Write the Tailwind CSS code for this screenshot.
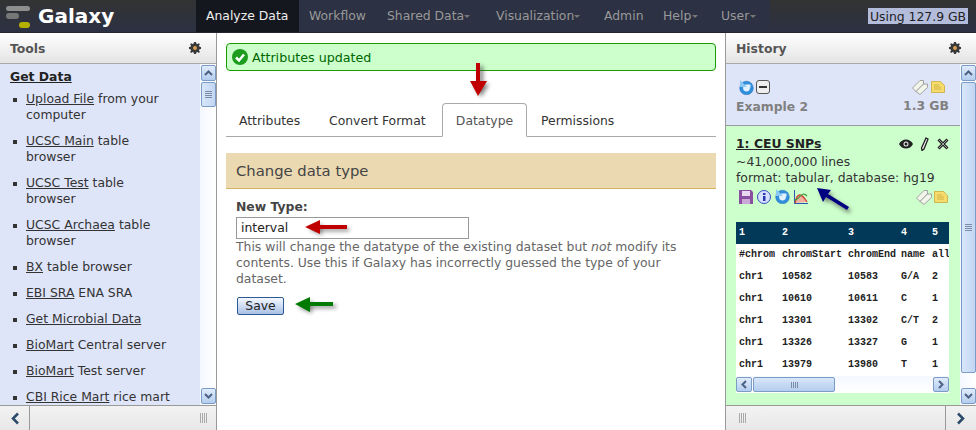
<!DOCTYPE html>
<html lang="en">
<head>
  <meta charset="UTF-8" />
  <title>Galaxy</title>
  <script src="https://cdn.jsdelivr.net/npm/@tailwindcss/browser@4"></script>
</head>
<body class="w-[976px] h-[430px] overflow-hidden relative bg-white text-[#333] text-[12.4px] leading-[16px] font-['DejaVu_Sans',sans-serif]">

  <!-- shared icons -->
  <svg class="hidden">
    <symbol id="gear" viewBox="0 0 12 12">
      <path fill="#3a3a3a" d="M5 0h2l.3 1.6 1.2.5L9.900 1.200l1 1-.9 1.400.5 1.200L12 5v2l-1.500.3-.5 1.200.9 1.400-1 1-1.400-.9-1.200.5L7 12H5l-.3-1.500-1.200-.5-1.400.9-1-1 .9-1.400-.5-1.200L0 7V5l1.500-.2.5-1.200-.9-1.400 1-1 1.400.9 1.200-.5z"/>
      <circle cx="6" cy="6" r="2" fill="#d8a050"/>
    </symbol>
    <symbol id="refresh" viewBox="0 0 15 15">
      <circle cx="7.500" cy="8" r="6.800" fill="#2f8fdc" stroke="#1f6fb8" stroke-width=".5"/>
      <circle cx="7.500" cy="8" r="3.400" fill="#e4f2ff"/>
      <path fill="#8ccaf5" d="M1 0v7h7z"/>
      <path fill="#e4f2ff" d="M8 4.500h3.500V8z"/>
    </symbol>
    <symbol id="tags" viewBox="0 0 16 16">
      <path fill="#f2f5ea" stroke="#9a9a9a" stroke-width=".9" d="M.5 9 8 1.500h3.500V5L4 12.500z"/>
      <path fill="#f2f5ea" stroke="#9a9a9a" stroke-width=".9" d="M4 12.500 11.500 5h4v3.500L8 15.500z"/>
    </symbol>
    <symbol id="note" viewBox="0 0 14 12">
      <path fill="#f6dc6c" stroke="#c9a93a" stroke-width=".8" d="M.5.500h9l4 4v7H.5z"/>
      <path stroke="#c9a93a" stroke-width=".8" d="M3 4h5M3 6h7M3 8h7"/>
    </symbol>
  </svg>

  <!-- masthead -->
  <header class="h-[33px] flex bg-gradient-to-b from-[#333333] to-[#2c3143] border-b border-[#23262f]">
    <div class="w-[196px] flex items-center pl-[6px] gap-[8px]">
      <svg width="24" height="24" viewBox="0 0 24 24">
        <rect x="0" y="2" width="24" height="5" rx="2.500" fill="#8e8e8e"/>
        <rect x="0" y="9" width="13" height="6" rx="3" fill="#777"/>
        <rect x="13" y="18" width="11" height="6" rx="3" fill="#b5b000"/>
      </svg>
      <span class="font-bold text-white text-[20px]">Galaxy</span>
    </div>
    <nav class="w-[574px] flex bg-[#2c3143] text-[#999]">
      <a class="w-[103px] bg-[#15171f] text-[#eee] pl-[10px] leading-[32px]">Analyze Data</a>
      <a class="w-[78px] pl-[10px] leading-[32px]">Workflow</a>
      <a class="w-[109px] pl-[10px] leading-[32px]">Shared Data<i class="inline-block mb-[2px] border-x-[3.500px] border-t-[3px] border-x-transparent border-t-[#777]"></i></a>
      <a class="w-[108px] pl-[10px] leading-[32px]">Visualization<i class="inline-block mb-[2px] border-x-[3.500px] border-t-[3px] border-x-transparent border-t-[#777]"></i></a>
      <a class="w-[59px] pl-[10px] leading-[32px]">Admin</a>
      <a class="w-[58px] pl-[10px] leading-[32px]">Help<i class="inline-block mb-[2px] ml-[1px] border-x-[3.500px] border-t-[3px] border-x-transparent border-t-[#777]"></i></a>
      <a class="flex-1 pl-[10px] leading-[32px]">User<i class="inline-block mb-[2px] ml-[1px] border-x-[3.500px] border-t-[3px] border-x-transparent border-t-[#777]"></i></a>
    </nav>
    <div class="flex-1 flex justify-end pt-[8px] pr-[8px]">
      <span class="h-[16px] w-[100px] text-center bg-[#b4bcdc] text-[#222] leading-[18px] whitespace-nowrap">Using 127.9 GB</span>
    </div>
  </header>

  <div class="flex h-[397px]">

    <!-- tools panel -->
    <aside class="w-[217px] flex flex-col border-r border-[#999]">
      <div class="h-[31px] flex items-center justify-between pl-[10px] pr-[15px] pt-[2px] bg-gradient-to-b from-white to-[#e4e4e4] border-b border-[#aaa]">
        <span class="font-bold text-[#555]">Tools</span>
        <svg width="12" height="12" class="mb-[3px]"><use href="#gear"/></svg>
      </div>
      <div class="h-[341px] flex bg-[#dfe5f9] overflow-hidden">
        <div class="w-[200px] pl-[10px] pt-[5px] text-[#333]">
          <a class="block font-bold underline text-[#222] mb-[6px]">Get Data</a>
          <ul class="pl-[16px] w-[166px] list-none flex flex-col gap-[10px] whitespace-normal">
            <li class="relative before:absolute before:content-[''] before:left-[-13px] before:top-[7px] before:w-[4px] before:h-[4px] before:bg-[#333]"><a class="underline">Upload File</a> from your computer</li>
            <li class="relative before:absolute before:content-[''] before:left-[-13px] before:top-[7px] before:w-[4px] before:h-[4px] before:bg-[#333]"><a class="underline">UCSC Main</a> table browser</li>
            <li class="relative before:absolute before:content-[''] before:left-[-13px] before:top-[7px] before:w-[4px] before:h-[4px] before:bg-[#333]"><a class="underline">UCSC Test</a> table browser</li>
            <li class="relative before:absolute before:content-[''] before:left-[-13px] before:top-[7px] before:w-[4px] before:h-[4px] before:bg-[#333]"><a class="underline">UCSC Archaea</a> table browser</li>
            <li class="relative before:absolute before:content-[''] before:left-[-13px] before:top-[7px] before:w-[4px] before:h-[4px] before:bg-[#333]"><a class="underline">BX</a> table browser</li>
            <li class="relative before:absolute before:content-[''] before:left-[-13px] before:top-[7px] before:w-[4px] before:h-[4px] before:bg-[#333]"><a class="underline">EBI SRA</a> ENA SRA</li>
            <li class="relative before:absolute before:content-[''] before:left-[-13px] before:top-[7px] before:w-[4px] before:h-[4px] before:bg-[#333]"><a class="underline">Get Microbial Data</a></li>
            <li class="relative before:absolute before:content-[''] before:left-[-13px] before:top-[7px] before:w-[4px] before:h-[4px] before:bg-[#333]"><a class="underline">BioMart</a> Central server</li>
            <li class="relative before:absolute before:content-[''] before:left-[-13px] before:top-[7px] before:w-[4px] before:h-[4px] before:bg-[#333]"><a class="underline">BioMart</a> Test server</li>
            <li class="relative before:absolute before:content-[''] before:left-[-13px] before:top-[7px] before:w-[4px] before:h-[4px] before:bg-[#333]"><a class="underline">CBI Rice Mart</a> rice mart</li>
          </ul>
        </div>
        <!-- scrollbar -->
        <div class="w-[16px] flex flex-col items-center bg-gradient-to-r from-[#f4f8ff] to-white pt-[1px] pb-[1px]">
          <div class="w-[15px] h-[16px] rounded-[2px] border border-[#7a9cc6] bg-gradient-to-b from-[#e0ecfb] to-[#b4cdee] flex items-center justify-center">
            <svg width="9" height="6"><path d="M1 5l3.500-3.500L8 5" fill="none" stroke="#4d6185" stroke-width="2"/></svg>
          </div>
          <div class="w-[15px] h-[25px] mt-[1px] rounded-[2px] border border-[#7a9cc6] bg-gradient-to-r from-[#d8e6f9] to-[#c2d6f2] flex flex-col items-center justify-center gap-[1px]">
            <i class="w-[7px] h-px bg-[#7b8ca8]"></i><i class="w-[7px] h-px bg-[#7b8ca8]"></i><i class="w-[7px] h-px bg-[#7b8ca8]"></i><i class="w-[7px] h-px bg-[#7b8ca8]"></i>
          </div>
          <div class="flex-1"></div>
          <div class="w-[15px] h-[16px] rounded-[2px] border border-[#7a9cc6] bg-gradient-to-b from-[#e0ecfb] to-[#b4cdee] flex items-center justify-center">
            <svg width="9" height="6"><path d="M1 1l3.500 3.500L8 1" fill="none" stroke="#4d6185" stroke-width="2"/></svg>
          </div>
        </div>
      </div>
      <div class="flex-1 flex border-t border-[#999] bg-gradient-to-b from-[#f2f2f2] to-[#e8e8e8]">
        <div class="w-[30px] border-r border-[#999] flex items-center justify-center">
          <svg width="10" height="13"><path d="M8 1.500 3 6.500l5 5" fill="none" stroke="#2d4a6a" stroke-width="2.500"/></svg>
        </div>
        <div class="flex-1 flex items-center justify-end pr-[9px] gap-[1px]">
          <i class="w-px h-[10px] bg-[#aaa]"></i><i class="w-px h-[10px] bg-[#aaa]"></i><i class="w-px h-[10px] bg-[#aaa]"></i><i class="w-px h-[10px] bg-[#aaa]"></i>
        </div>
      </div>
    </aside>

    <!-- center -->
    <main class="w-[508px] pl-[9px] pr-[9px] pt-[10px]">
      <div class="h-[28px] flex items-center gap-[4px] pl-[5px] bg-[#ccffcc] border border-[#1a9c00] rounded-[4px] text-[#006600]">
        <svg width="16" height="16" viewBox="0 0 16 16"><circle cx="8" cy="8" r="8" fill="#1e9c1e"/><path d="M4 8.500l3 3 5-6" fill="none" stroke="#fff" stroke-width="2.500"/></svg>
        <span class="pt-px text-[12.700px]">Attributes updated</span>
      </div>
      <div class="mt-[32px] h-[34px] flex border-b border-[#aaa] text-[#333]">
        <a class="pl-[13px] w-[90px] leading-[36px]">Attributes</a>
        <a class="pl-[13px] w-[126px] leading-[36px]">Convert Format</a>
        <a class="w-[85px] h-[34px] text-center leading-[34px] bg-white text-[#555] border border-[#aaa] border-b-white rounded-t-[4px]">Datatype</a>
        <a class="pl-[14px] leading-[36px]">Permissions</a>
      </div>
      <h2 class="mt-[16px] h-[36px] pl-[10px] text-[14.800px] leading-[36px] text-[#444] bg-[#ebd9b2] border-b border-[#d8b365]">Change data type</h2>
      <form class="pl-[10px] pt-[10px]">
        <label class="block font-bold text-[#444]">New Type:</label>
        <input value="interval" class="block mt-[2px] w-[233px] h-[22px] pl-[4px] pb-px text-[12.400px] text-[#222] bg-white border border-[#999] font-['DejaVu_Sans',sans-serif]" />
        <p class="w-[450px] text-[#666]">This will change the datatype of the existing dataset but <em>not</em> modify its contents. Use this if Galaxy has incorrectly guessed the type of your dataset.</p>
        <button type="button" class="block mt-[10px] ml-px w-[47px] h-[18px] text-[12.400px] leading-[16px] text-[#222] border border-[#2e5a94] rounded-[2px] bg-gradient-to-b from-[#f4f8ff] to-[#a9c0e4]">Save</button>
      </form>
    </main>

    <!-- history panel -->
    <aside class="flex-1 flex flex-col border-l border-[#999]">
      <div class="h-[31px] flex items-center justify-between pl-[10px] pr-[15px] pt-[2px] bg-gradient-to-b from-white to-[#e4e4e4] border-b border-[#aaa]">
        <span class="font-bold text-[#555]">History</span>
        <svg width="12" height="12" class="mb-[3px]"><use href="#gear"/></svg>
      </div>
      <div class="h-[341px] flex overflow-hidden">
        <div class="w-[234px] flex flex-col">
          <div class="h-[62px] pl-[13px] pr-[11px] pt-[15px] flex justify-between bg-[#dfe5f9] border-b border-[#999] text-[#888] font-bold">
            <div>
              <div class="flex items-center gap-[1px] h-[16px]">
                <svg width="15" height="15"><use href="#refresh"/></svg>
                <span class="w-[14px] h-[14px] ml-[1px] rounded-[3px] border border-[#555] bg-[#eee] flex items-center justify-center"><i class="w-[8px] h-[2px] bg-[#333]"></i></span>
              </div>
              <div class="mt-[4px] ml-[-3px] text-[#808080]">Example 2</div>
            </div>
            <div class="flex flex-col items-end">
              <div class="flex items-center gap-[3px] h-[16px] pr-[4px]">
                <svg width="16" height="16"><use href="#tags"/></svg>
                <svg width="14" height="12"><use href="#note"/></svg>
              </div>
              <div class="mt-[3px] text-[#808080]">1.3 GB</div>
            </div>
          </div>
          <div class="flex-1 bg-[#ccffcc] pl-[10px] pr-[11px] pt-[10px] text-[#333] overflow-hidden">
            <div class="flex justify-between items-center">
              <a class="font-bold underline text-[#222]">1: CEU SNPs</a>
              <div class="flex items-center gap-[7px]">
                <svg width="14" height="10" viewBox="0 0 14 10"><path d="M0 5c3-6 11-6 14 0-3 6-11 6-14 0z" fill="#222"/><circle cx="7" cy="5" r="2.500" fill="#eee"/><circle cx="7" cy="5" r="1.500" fill="#222"/></svg>
                <svg width="9" height="14" viewBox="0 0 9 14"><path d="M6 1l2 1-4 10-2 1.500L1.500 11z" fill="#eee" stroke="#222" stroke-width="1.300"/></svg>
                <svg width="12" height="12" viewBox="0 0 12 12" class="ml-px"><path d="M1.500 1.500l9 9M10.500 1.500l-9 9" stroke="#222" stroke-width="3"/><path d="M2 2l8 8M10 2l-8 8" stroke="#ddd" stroke-width=".7"/></svg>
              </div>
            </div>
            <p class="mt-[2px]">~41,000,000 lines<br />format: tabular, database: hg19</p>
            <div class="flex justify-between items-center h-[17px] mt-[2px] pl-[3px] pr-[1px]">
              <div class="flex items-center gap-[4px]">
                <svg width="14" height="14" viewBox="0 0 14 14"><path d="M0 0h12l2 2v12H0z" fill="#8a4fa0"/><rect x="3" y="1" width="8" height="5" fill="#e8d8f0"/><rect x="3" y="9" width="8" height="5" fill="#c9a8d8"/></svg>
                <svg width="14" height="14" viewBox="0 0 14 14"><circle cx="7" cy="7" r="6.500" fill="#d8e0ff" stroke="#3a4fc0"/><rect x="6" y="6" width="2.500" height="5" fill="#2838b0"/><rect x="6" y="3" width="2.500" height="2" fill="#2838b0"/></svg>
                <svg width="15" height="15"><use href="#refresh"/></svg>
                <svg width="14" height="14" viewBox="0 0 14 14"><path d="M.5 0v13.500H14" fill="none" stroke="#2a5ab0"/><path d="M1 13C3 3 7 2 13 12" fill="#f3b0a0" stroke="#d04030" stroke-width="1.300"/><path d="M1 10C5 10 8 0 13 6" fill="none" stroke="#40a040" stroke-width="1.300"/></svg>
              </div>
              <div class="flex items-center gap-[2px]">
                <svg width="16" height="16"><use href="#tags"/></svg>
                <svg width="14" height="12"><use href="#note"/></svg>
              </div>
            </div>
            <div class="mt-[17px] w-[213px] h-[171px] overflow-hidden flex flex-col font-['Liberation_Mono',monospace] text-[10px] font-bold">
              <table class="w-[213px] table-fixed bg-white text-[#222]">
                <thead>
                  <tr class="h-[22px] bg-[#023858] text-white text-left">
                    <th class="w-[43px] pl-[3px]">1</th><th class="w-[66px] pl-[3px]">2</th><th class="w-[53px] pl-[3px]">3</th><th class="w-[31px] pl-[3px]">4</th><th class="pl-[3px]">5</th>
                  </tr>
                </thead>
                <tbody>
                  <tr class="h-[22px]"><td class="pl-[3px]">#chrom</td><td class="pl-[3px] whitespace-nowrap">chromStart</td><td class="pl-[3px] whitespace-nowrap">chromEnd</td><td class="pl-[3px]">name</td><td class="pl-[3px]">all</td></tr>
                  <tr class="h-[22px]"><td class="pl-[3px]">chr1</td><td class="pl-[3px]">10582</td><td class="pl-[3px]">10583</td><td class="pl-[3px]">G/A</td><td class="pl-[3px]">2</td></tr>
                  <tr class="h-[22px]"><td class="pl-[3px]">chr1</td><td class="pl-[3px]">10610</td><td class="pl-[3px]">10611</td><td class="pl-[3px]">C</td><td class="pl-[3px]">1</td></tr>
                  <tr class="h-[22px]"><td class="pl-[3px]">chr1</td><td class="pl-[3px]">13301</td><td class="pl-[3px]">13302</td><td class="pl-[3px]">C/T</td><td class="pl-[3px]">2</td></tr>
                  <tr class="h-[22px]"><td class="pl-[3px]">chr1</td><td class="pl-[3px]">13326</td><td class="pl-[3px]">13327</td><td class="pl-[3px]">G</td><td class="pl-[3px]">1</td></tr>
                  <tr class="h-[22px]"><td class="pl-[3px]">chr1</td><td class="pl-[3px]">13979</td><td class="pl-[3px]">13980</td><td class="pl-[3px]">T</td><td class="pl-[3px]">1</td></tr>
                </tbody>
              </table>
              <!-- horizontal scrollbar -->
              <div class="flex-none h-[17px] flex items-center bg-gradient-to-b from-[#f4f8ff] to-white">
                <div class="w-[16px] h-[15px] rounded-[2px] border border-[#7a9cc6] bg-gradient-to-b from-[#e0ecfb] to-[#b4cdee] flex items-center justify-center">
                  <svg width="6" height="9"><path d="M5 1 1.500 4.500 5 8" fill="none" stroke="#4d6185" stroke-width="2"/></svg>
                </div>
                <div class="w-[82px] h-[15px] ml-px rounded-[2px] border border-[#7a9cc6] bg-gradient-to-b from-[#d8e6f9] to-[#b4cdee] flex items-center justify-center gap-px">
                  <i class="w-px h-[6px] bg-[#7b8ca8]"></i><i class="w-px h-[6px] bg-[#7b8ca8]"></i><i class="w-px h-[6px] bg-[#7b8ca8]"></i><i class="w-px h-[6px] bg-[#7b8ca8]"></i>
                </div>
                <div class="flex-1"></div>
                <div class="w-[16px] h-[15px] rounded-[2px] border border-[#7a9cc6] bg-gradient-to-b from-[#e0ecfb] to-[#b4cdee] flex items-center justify-center">
                  <svg width="6" height="9"><path d="M1 1l3.500 3.500L1 8" fill="none" stroke="#4d6185" stroke-width="2"/></svg>
                </div>
              </div>
            </div>
          </div>
        </div>
        <!-- scrollbar -->
        <div class="flex-1 flex flex-col items-center bg-gradient-to-r from-[#f4f8ff] to-white pt-[1px] pb-[1px]">
          <div class="w-[15px] h-[16px] rounded-[2px] border border-[#7a9cc6] bg-gradient-to-b from-[#e0ecfb] to-[#b4cdee] flex items-center justify-center">
            <svg width="9" height="6"><path d="M1 5l3.500-3.500L8 5" fill="none" stroke="#4d6185" stroke-width="2"/></svg>
          </div>
          <div class="w-[15px] h-[291px] mt-[1px] rounded-[2px] border border-[#7a9cc6] bg-gradient-to-r from-[#d8e6f9] to-[#c2d6f2] flex flex-col items-center justify-center gap-[1px]">
            <i class="w-[7px] h-px bg-[#7b8ca8]"></i><i class="w-[7px] h-px bg-[#7b8ca8]"></i><i class="w-[7px] h-px bg-[#7b8ca8]"></i><i class="w-[7px] h-px bg-[#7b8ca8]"></i>
          </div>
          <div class="flex-1"></div>
          <div class="w-[15px] h-[16px] rounded-[2px] border border-[#7a9cc6] bg-gradient-to-b from-[#e0ecfb] to-[#b4cdee] flex items-center justify-center">
            <svg width="9" height="6"><path d="M1 1l3.500 3.500L8 1" fill="none" stroke="#4d6185" stroke-width="2"/></svg>
          </div>
        </div>
      </div>
      <div class="flex-1 flex border-t border-[#999] bg-gradient-to-b from-[#f2f2f2] to-[#e8e8e8]">
        <div class="flex-1 flex items-center pl-[13px] gap-[1px]">
          <i class="w-px h-[10px] bg-[#aaa]"></i><i class="w-px h-[10px] bg-[#aaa]"></i><i class="w-px h-[10px] bg-[#aaa]"></i><i class="w-px h-[10px] bg-[#aaa]"></i>
        </div>
        <div class="w-[31px] border-l border-[#999] flex items-center justify-center">
          <svg width="10" height="13"><path d="M2 1.500l5 5-5 5" fill="none" stroke="#2d4a6a" stroke-width="2.500"/></svg>
        </div>
      </div>
    </aside>
  </div>

  <!-- annotation arrows drawn over the screenshot -->
  <svg class="absolute inset-0 pointer-events-none" width="976" height="430" viewBox="0 0 976 430">
    <defs><filter id="blur" x="-50%" y="-50%" width="200%" height="200%"><feGaussianBlur stdDeviation="2"/></filter></defs>
    <g filter="url(#blur)" fill="#444" opacity=".7">
      <path d="M479 66h4v18h6l-8 13-8-13h6z"/>
      <path d="M309 229l13-5v4h27v3h-27v4z"/>
      <path d="M298 307l14-6v4h24v3h-24v5z"/>
      <path d="M820 191l13 3-3 3 21 13-2 3-21-13-2 3z"/>
    </g>
    <path fill="#c00000" d="M476 63h4v18h7l-9 15-8-15h6z"/>
    <path fill="#c00000" d="M305 227l15-7v5h27v4h-27v5z"/>
    <path fill="#007a00" d="M295 304l15-7v5h23v4h-23v6z"/>
    <path fill="#000080" d="M817 188l14 2-3 4 21 13-2 3-21-13-3 5z"/>
  </svg>
</body>
</html>
